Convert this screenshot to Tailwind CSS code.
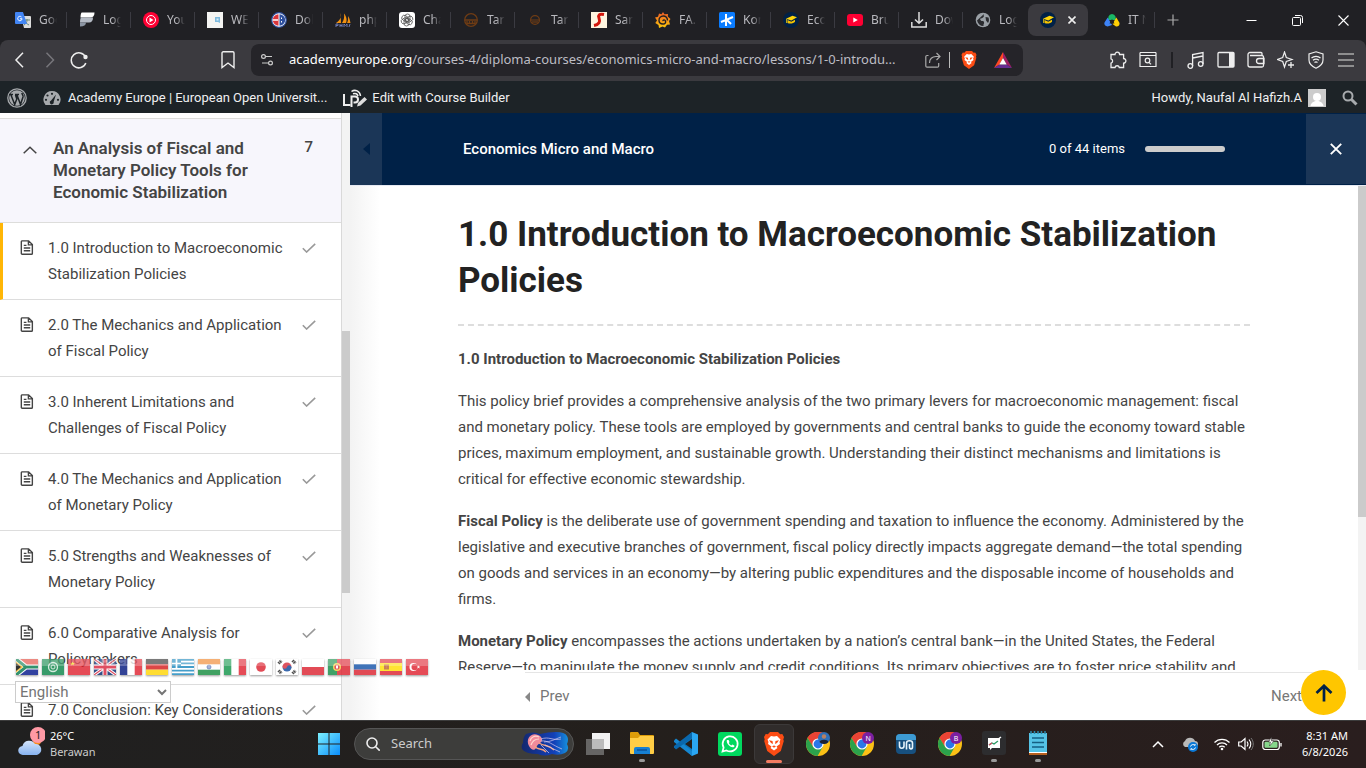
<!DOCTYPE html>
<html lang="en">
<head>
  <meta charset="UTF-8">
  <meta name="viewport" content="width=device-width, initial-scale=1">
  <title>1.0 Introduction to Macroeconomic Stabilization Policies</title>
  <script src="https://cdn.jsdelivr.net/npm/@tailwindcss/browser@4"></script>
</head>
<body class="h-screen flex flex-col overflow-hidden bg-white font-['Roboto',sans-serif] text-[#444]">

  <!-- shared icons -->
  <svg class="hidden">
    <symbol id="doc" viewBox="0 0 12 14"><path d="M1.5 .8h6L11 4.3v8.2a.8.8 0 0 1-.8.8H1.5a.8.8 0 0 1-.8-.8v-11a.8.8 0 0 1 .8-.7zM7.3.8v3.7H11M3 5h2.5M3 7.5h6M3 10h6" fill="none" stroke="#444" stroke-width="1.3"/></symbol>
    <symbol id="check" viewBox="0 0 14 10"><path d="M.8 5.2 4.6 9 13.2.9" fill="none" stroke="#999" stroke-width="1.6"/></symbol>
    <symbol id="cap" viewBox="0 0 16 16"><circle cx="8" cy="8" r="8" fill="#002147"/><path d="M3 6.800 9.500 3.800l4.500 1.400-5.600 3.400z" fill="#ffd60a"/><path d="m4.500 8 3.800 1.700 3.700-2v2c-1.500 1.800-5 2.400-7.500 1.200z" fill="#f5c400"/><path d="M3.600 7v4" stroke="#ffd60a" stroke-width=".8"/></symbol>
    <symbol id="chrome" viewBox="0 0 24 24"><circle cx="12" cy="12" r="12" fill="#fbc116"/><path d="M12 12 1.6 6A12 12 0 0 1 22.4 6z" fill="#ea4335"/><path d="M12 6.5h10.7A12 12 0 0 0 1.6 6L7 15z" fill="#ea4335"/><path d="M1.6 6a12 12 0 0 0 10 18l5.2-9.3L7.2 15z" fill="#2ba24c"/><circle cx="12" cy="12" r="5.6" fill="#fff"/><circle cx="12" cy="12" r="4.4" fill="#2a77e8"/></symbol>
    <symbol id="brave" viewBox="0 0 20 24"><path d="M6 0h8l2.2 2.300L18.300 2 20 5l-.7 2.500.5 1.500-3 10L10 24l-6.800-5L.2 9l.5-1.500L0 5l1.700-3 2.100.3z" fill="#fb4c14"/><path d="M10 4.500 13 4l3.500 3.500-1 2.500.5 2-3.500 2.500 1 1.500L10 18.500 6.500 16l1-1.500L4 12l.5-2-1-2.500L7 4z" fill="#fff"/><path d="m5 8.300 3.500.7.500 3L7 11zM15 8.300l-3.500.7-.5 3 2-1zM8 14.200l2-.7 2 .7-2 1.500z" fill="#fb4c14"/></symbol>
  </svg>

  <!-- browser tabs -->
  <header class="shrink-0 bg-[#202024] font-['Noto_Sans',sans-serif]">
    <div class="h-10 flex items-center pl-[3px] text-[12px] text-[#b9b9be]">
      <a href="#" class="w-16 h-4 pl-3 flex items-center gap-2 border-r border-[#3b3b42]">
        <svg class="w-4 h-4 shrink-0" viewBox="0 0 16 16"><path d="M6 4h9a1 1 0 0 1 1 1v10a1 1 0 0 1-1 1H9z" fill="#dcdcdc"/><path d="M9 8h6M12 7v1c0 2-1 4-3 5M10 9c1 2 2 3 4 4" stroke="#687" fill="none"/><path d="M1 0h7l4 12H1a1 1 0 0 1-1-1V1a1 1 0 0 1 1-1z" fill="#4285f4"/><path d="M6.500 5a2.200 2.200 0 1 0 .6 1.800H5" stroke="#fff" fill="none"/></svg>
        <span class="w-[18px] leading-4 overflow-hidden whitespace-nowrap mask-r-from-50%">Google</span></a>
      <a href="#" class="w-16 h-4 pl-3 flex items-center gap-2 border-r border-[#3b3b42]">
        <svg class="w-4 h-4 shrink-0" viewBox="0 0 16 16"><path d="M3 .5h12.500c0 3.500-1.500 5-4 5H1.500c0-3 .5-5 1.500-5z" fill="#fff"/><path d="M2 5.500h12c0 3.500-1.500 5-4 5H1c0-2.500.3-4 1-5z" fill="#b4bac4"/><path d="M1 10.500h6c0 2.500-2 4-6 4z" fill="#8c95a3"/></svg>
        <span class="w-[18px] leading-4 overflow-hidden whitespace-nowrap mask-r-from-50%">Log in</span></a>
      <a href="#" class="w-16 h-4 pl-3 flex items-center gap-2 border-r border-[#3b3b42]">
        <svg class="w-4 h-4 shrink-0" viewBox="0 0 16 16"><circle cx="8" cy="8" r="8" fill="#f03"/><circle cx="8" cy="8" r="4.500" fill="none" stroke="#fff"/><path d="m6.500 5.500 4 2.500-4 2.500z" fill="#fff"/></svg>
        <span class="w-[18px] leading-4 overflow-hidden whitespace-nowrap mask-r-from-50%">YouTube</span></a>
      <a href="#" class="w-16 h-4 pl-3 flex items-center gap-2 border-r border-[#3b3b42]">
        <svg class="w-4 h-4 shrink-0" viewBox="0 0 16 16"><path d="M0 0h16v16H0z" fill="#f4f4f2"/><path d="M8 5h5v6l-2-1H8z" fill="#7db9dd"/><path d="M9.500 6.500h2v2h-2z" fill="#d9edf8"/></svg>
        <span class="w-[18px] leading-4 overflow-hidden whitespace-nowrap mask-r-from-50%">WEB</span></a>
      <a href="#" class="w-16 h-4 pl-3 flex items-center gap-2 border-r border-[#3b3b42]">
        <svg class="w-4 h-4 shrink-0" viewBox="0 0 16 16"><circle cx="8" cy="8" r="7.300" fill="#fff" stroke="#2d4f9e" stroke-width="1.200"/><path d="M7.500 2.300a5.700 5.700 0 0 0 0 11.400z" fill="#d9353b"/><path d="M2 8h5" stroke="#fff" stroke-width="1.500"/><path d="M8.500 2.300a5.700 5.700 0 0 1 0 11.400z" fill="#2d4f9e"/><path d="M10 5.500h1v1.500h-1zM10 9h1v1.500h-1z" fill="#fff"/></svg>
        <span class="w-[18px] leading-4 overflow-hidden whitespace-nowrap mask-r-from-50%">Dol</span></a>
      <a href="#" class="w-16 h-4 pl-3 flex items-center gap-2 border-r border-[#3b3b42]">
        <svg class="w-4 h-4 shrink-0" viewBox="0 0 16 16"><path d="M5.500 1c1 3 .5 7-4.500 10h5zM9 1.500C12 5 12 9 11 11H7c2-3 2.500-6 2-9.500zM13 4c2 3 2 5 2.500 7H12c1-2 1.300-4 1-7z" fill="#f29111"/><path d="M1 15v-3h2v1.500H1M5 12v3m0-1.500h2M7 12v3m2 0v-3l1.500 1.500L12 12v3m2 0 1-3" fill="none" stroke="#6c78af"/></svg>
        <span class="w-[18px] leading-4 overflow-hidden whitespace-nowrap mask-r-from-50%">phpMyAdmin</span></a>
      <a href="#" class="w-16 h-4 pl-3 flex items-center gap-2 border-r border-[#3b3b42]">
        <svg class="w-4 h-4 shrink-0" viewBox="0 0 16 16"><rect width="16" height="16" rx="3" fill="#fff"/><g fill="none" stroke="#555" stroke-width=".8"><rect x="6" y="2" width="5" height="7.500" rx="2.500"/><rect x="6" y="2" width="5" height="7.500" rx="2.500" transform="rotate(60 8 8)"/><rect x="6" y="2" width="5" height="7.500" rx="2.500" transform="rotate(120 8 8)"/><rect x="6" y="2" width="5" height="7.500" rx="2.500" transform="rotate(180 8 8)"/><rect x="6" y="2" width="5" height="7.500" rx="2.500" transform="rotate(240 8 8)"/><rect x="6" y="2" width="5" height="7.500" rx="2.500" transform="rotate(300 8 8)"/></g></svg>
        <span class="w-[18px] leading-4 overflow-hidden whitespace-nowrap mask-r-from-50%">ChatGPT</span></a>
      <a href="#" class="w-16 h-4 pl-3 flex items-center gap-2 border-r border-[#3b3b42]">
        <svg class="w-4 h-4 shrink-0" viewBox="0 0 16 16"><g fill="none" stroke="#6f3c14" stroke-width="1.300"><circle cx="8" cy="8" r="6.300"/><path d="M2 8h12M4 9v3m2.500-3v2.500m3-2.500v2.500M12 9v3M4 11.500h8"/></g></svg>
        <span class="w-[18px] leading-4 overflow-hidden whitespace-nowrap mask-r-from-50%">Tarif</span></a>
      <a href="#" class="w-16 h-4 pl-3 flex items-center gap-2 border-r border-[#3b3b42]">
        <svg class="w-4 h-4 shrink-0" viewBox="0 0 16 16"><g fill="none" stroke="#6f3c14" stroke-width="1.200"><circle cx="8" cy="8" r="4.400"/><path d="M4 8h8M6 9v2m2-2v2m2-2v2"/></g></svg>
        <span class="w-[18px] leading-4 overflow-hidden whitespace-nowrap mask-r-from-50%">Tarif</span></a>
      <a href="#" class="w-16 h-4 pl-3 flex items-center gap-2 border-r border-[#3b3b42]">
        <svg class="w-4 h-4 shrink-0" viewBox="0 0 16 16"><path d="M0 0h16v16H0z" fill="#fff5df"/><path d="M13 2.500c-5-1-6 1-5 3.500 1.500 4 0 6.500-5 7.500" fill="none" stroke="#d3170c" stroke-width="3"/></svg>
        <span class="w-[18px] leading-4 overflow-hidden whitespace-nowrap mask-r-from-50%">San</span></a>
      <a href="#" class="w-16 h-4 pl-3 flex items-center gap-2 border-r border-[#3b3b42]">
        <svg class="w-4 h-4 shrink-0" viewBox="0 0 16 16"><defs><linearGradient id="gf" x2="0" y2="1"><stop stop-color="#f05a28"/><stop offset="1" stop-color="#fbca0a"/></linearGradient></defs><path d="M8 0 9.500 2.200 13 2l-.2 2.500L15.500 7 14 9l1 3.500-3 .3L10 15.500l-2.500-1L4 16l-.5-3L.3 11 2 8.500 0 5.500 3 4.800 4 1.500l2.500.8z" fill="url(#gf)"/><path d="M12.500 8.500c0-3-2-4.500-4.300-4.500S4 6 4 8.300s1.800 3.700 4 3.700 3-1.500 2.500-3-2.700-1.500-2.500.2" fill="none" stroke="#202024" stroke-width="1.400"/></svg>
        <span class="w-[18px] leading-4 overflow-hidden whitespace-nowrap mask-r-from-50%">FA.</span></a>
      <a href="#" class="w-16 h-4 pl-3 flex items-center gap-2 border-r border-[#3b3b42]">
        <svg class="w-4 h-4 shrink-0" viewBox="0 0 16 16"><rect width="16" height="16" rx="1.500" fill="#0a7cff"/><path d="M7 2v12M2 10l5-2 7-3M8 8l4 4" stroke="#fff" stroke-width="2" fill="none"/></svg>
        <span class="w-[18px] leading-4 overflow-hidden whitespace-nowrap mask-r-from-50%">Kon</span></a>
      <a href="#" class="w-16 h-4 pl-3 flex items-center gap-2 border-r border-[#3b3b42]">
        <svg class="w-4 h-4 shrink-0"><use href="#cap"/></svg>
        <span class="w-[18px] leading-4 overflow-hidden whitespace-nowrap mask-r-from-50%">Eco</span></a>
      <a href="#" class="w-16 h-4 pl-3 flex items-center gap-2 border-r border-[#3b3b42]">
        <svg class="w-4 h-4 shrink-0" viewBox="0 0 16 16"><rect y="2" width="16" height="12" rx="3" fill="#f03"/><path d="m6.300 5.500 4.500 2.500-4.500 2.500z" fill="#fff"/></svg>
        <span class="w-[18px] leading-4 overflow-hidden whitespace-nowrap mask-r-from-50%">Bruno</span></a>
      <a href="#" class="w-16 h-4 pl-3 flex items-center gap-2 border-r border-[#3b3b42]">
        <svg class="w-4 h-4 shrink-0" viewBox="0 0 16 16"><path d="M8 0v11M4 7.500 8 11.300l4-3.800M.8 10v5h14.400v-5" fill="none" stroke="#ddd" stroke-width="1.500"/></svg>
        <span class="w-[18px] leading-4 overflow-hidden whitespace-nowrap mask-r-from-50%">Dow</span></a>
      <a href="#" class="w-16 h-4 pl-3 flex items-center gap-2">
        <svg class="w-4 h-4 shrink-0" viewBox="0 0 16 16"><circle cx="8" cy="8" r="7.300" fill="#9aa0a6"/><path d="M9 2c-1 2 1 2-1 3.500S4.500 6 5.500 8s3 0 3.500 2-1 2-.5 4C5 14 3 12 2 8.500zM10.500 5l3 .5c.7 2 .7 4-.5 5.500l-2-2.500z" fill="#2a2b2f"/></svg>
        <span class="w-[18px] leading-4 overflow-hidden whitespace-nowrap mask-r-from-50%">Log in</span></a>
      <div class="w-[60px] h-8 ml-px pl-3 flex items-center gap-3 rounded-lg bg-[#3b3a3f]">
        <svg class="w-4 h-4 shrink-0"><use href="#cap"/></svg>
        <button aria-label="Close tab"><svg class="w-2 h-2" viewBox="0 0 8 8"><path d="m.5.5 7 7m0-7-7 7" stroke="#eee" stroke-width="1.600"/></svg></button>
      </div>
      <a href="#" class="w-[67px] h-4 pl-4 flex items-center gap-2 border-r border-[#3b3b42]">
        <svg class="w-4 h-4 shrink-0" viewBox="0 0 16 16"><path d="M4.500 4.500a3.700 3.700 0 0 1 7 0L12 8H4z" fill="#19b865"/><path d="M3.700 5.500 8 13l-4.500 1.500C1 14-.5 12 .8 10z" fill="#3d83f6"/><path d="m12.300 5.500 3 5c1 2.500-1 4.500-3.300 4L8.500 12z" fill="#ffcf05"/><path d="m8 7 2.500 4.500h-5z" fill="#202024"/></svg>
        <span class="w-[18px] leading-4 overflow-hidden whitespace-nowrap mask-r-from-50%">IT N</span></a>
      <button class="ml-3" aria-label="New tab"><svg class="w-3 h-3" viewBox="0 0 12 12"><path d="M6 .5v11M.5 6h11" stroke="#aaa" stroke-width="1.200"/></svg></button>
      <div class="ml-auto pr-[17px] flex items-center gap-[35px]">
        <button aria-label="Minimize"><svg class="w-[11px] h-[11px]" viewBox="0 0 11 11"><path d="M.5 5.500h10" stroke="#fff"/></svg></button>
        <button aria-label="Restore"><svg class="w-[11px] h-[11px]" viewBox="0 0 11 11"><path d="M1.500 2.500h6a1 1 0 0 1 1 1v6a1 1 0 0 1-1 1h-6a1 1 0 0 1-1-1v-6a1 1 0 0 1 1-1zM3 .5h5.500a2 2 0 0 1 2 2V8" fill="none" stroke="#fff"/></svg></button>
        <button aria-label="Close"><svg class="w-[11px] h-[11px]" viewBox="0 0 11 11"><path d="m.5.5 10 10m0-10-10 10" stroke="#fff" stroke-width="1.100"/></svg></button>
      </div>
    </div>

    <!-- toolbar -->
    <div class="h-[41px] pb-px px-3 flex items-center rounded-t-lg bg-[#3b3a3f]">
      <nav class="flex items-center gap-[13px]">
        <button aria-label="Back"><svg class="w-4 h-4" viewBox="0 0 16 16"><path d="M11 .8 4 8l7 7.200" fill="none" stroke="#eee" stroke-width="1.500"/></svg></button>
        <button aria-label="Forward"><svg class="w-4 h-4" viewBox="0 0 16 16"><path d="M5.500.8 12.500 8l-7 7.200" fill="none" stroke="#77767b" stroke-width="1.500"/></svg></button>
        <button aria-label="Reload"><svg class="w-[18px] h-[18px]" viewBox="0 0 18 18"><path d="M15.500 6A7.500 7.500 0 1 0 15.800 12" fill="none" stroke="#eee" stroke-width="1.500"/><circle cx="15.500" cy="6" r="2.200" fill="#eee"/></svg></button>
      </nav>
      <button class="ml-[133px]" aria-label="Bookmark"><svg class="w-3.5 h-[18px]" viewBox="0 0 14 18"><path d="M1 2a1.200 1.200 0 0 1 1.200-1.200h9.600A1.200 1.200 0 0 1 13 2v14.500L7 12l-6 4.500z" fill="none" stroke="#eee" stroke-width="1.400"/></svg></button>
      <div class="flex-1 h-8 ml-4 px-2.5 flex items-center rounded-lg bg-[#252429]">
        <svg class="w-3 h-3 shrink-0" viewBox="0 0 12 12"><g fill="none" stroke="#ccc" stroke-width="1.200"><circle cx="2.500" cy="2.500" r="1.900"/><path d="M4.500 2.500H11M1 9h6.500"/><circle cx="9.500" cy="9" r="1.900"/></g></svg>
        <span class="ml-4 flex-1 w-0 overflow-hidden text-ellipsis whitespace-nowrap text-[13px] text-[#bdbdc4]"><span class="text-white">academyeurope.org</span>/courses-4/diploma-courses/economics-micro-and-macro/lessons/1-0-introdu...</span>
        <svg class="w-4 h-4 ml-4 shrink-0" viewBox="0 0 16 16"><path d="M3.500 3.500H2a1.200 1.200 0 0 0-1.200 1.200V14A1.200 1.200 0 0 0 2 15.200h10.500a1.200 1.200 0 0 0 1.200-1.200v-3M4.500 11c0-4 2.500-6.500 6.500-6.500h4M11.500 1 15 4.500 11.500 8" fill="none" stroke="#aaa" stroke-width="1.200"/></svg>
        <span class="w-px h-4 ml-2 bg-[#bbb]"></span>
        <svg class="w-4 h-[18px] ml-[11px]"><use href="#brave"/></svg>
        <svg class="w-[18px] h-4 ml-[17px] mr-px" viewBox="0 0 18 16"><path d="M9 0 0 16l5.500-3.500L9 6z" fill="#ff4724"/><path d="m9 0 9 16-5.500-3.500L9 6z" fill="#9e1f63"/><path d="M0 16h18l-5.500-3.500h-7z" fill="#662d91"/><path d="m9 6 3.700 6.500H5.300z" fill="#fff"/></svg>
      </div>
      <nav class="ml-[86px] -mr-px flex items-center gap-3">
        <button aria-label="Extensions"><svg class="w-[18px] h-[18px]" viewBox="0 0 18 18"><path d="M2 3.500h4a2.300 2.300 0 1 1 4.600 0h4v4a2.300 2.300 0 1 1 0 4.600v4.400h-4.300a2.200 2.200 0 0 0-4.300 0H2v-4.300a2.300 2.300 0 0 0 0-4.400z" fill="none" stroke="#eee" stroke-width="1.300"/></svg></button>
        <button aria-label="Search tabs"><svg class="w-[18px] h-[18px]" viewBox="0 0 18 18"><path d="M1 1.500h16M1 4.500h16v11H1zM1 1.500v3m16-3v3" fill="none" stroke="#eee" stroke-width="1.200"/><circle cx="8.500" cy="9.500" r="2.300" fill="none" stroke="#eee" stroke-width="1.200"/><path d="m10 11.300 2 2" stroke="#eee" stroke-width="1.200"/></svg></button>
        <span class="w-0.5 h-4 mx-0.5 bg-[#202024]"></span>
        <button aria-label="Media"><svg class="w-[18px] h-[18px]" viewBox="0 0 18 18"><g fill="none" stroke="#eee" stroke-width="1.300"><circle cx="3.300" cy="15" r="2.300"/><circle cx="13.700" cy="13" r="2.300"/><path d="M5.600 15V3.500L16 1.500V13M5.600 7 16 5"/></g></svg></button>
        <button aria-label="Sidebar"><svg class="w-[18px] h-[18px]" viewBox="0 0 18 18"><rect x="1" y="1.500" width="16" height="14.500" rx="1" fill="none" stroke="#eee" stroke-width="1.300"/><path d="M12 1.500h5V16h-5z" fill="#eee"/></svg></button>
        <button aria-label="Wallet"><svg class="w-[18px] h-[18px]" viewBox="0 0 18 18"><path d="M15 4.500V2.500a1 1 0 0 0-1-1H3a2 2 0 0 0-2 2V14a2 2 0 0 0 2 2h12a1.500 1.500 0 0 0 1.500-1.500V6A1.500 1.500 0 0 0 15 4.500H3M17 7.500h-5a2.500 2.500 0 0 0 0 5h5z" fill="none" stroke="#eee" stroke-width="1.300"/></svg></button>
        <button aria-label="AI assistant"><svg class="w-[18px] h-[18px]" viewBox="0 0 18 18"><path d="M7.500 1 9.300 6.500 15 8.500l-5.700 2-1.800 5.500-1.800-5.500L.5 8.500l5.200-2z" fill="none" stroke="#eee" stroke-width="1.200"/><path d="M14 11v6m-3-3h6" stroke="#eee" stroke-width="1.300"/></svg></button>
        <button aria-label="VPN"><svg class="w-[18px] h-[18px]" viewBox="0 0 18 18"><path d="M9 .8 16 3v6c0 4-3 6.500-7 8.200C5 15.500 2 13 2 9V3zM4.500 7c2.500-2.200 6.500-2.200 9 0M6 9.300c1.800-1.500 4.200-1.500 6 0M7.500 11.500c1-.7 2-.7 3 0" fill="none" stroke="#eee" stroke-width="1.200"/></svg></button>
        <button aria-label="Menu"><svg class="w-[18px] h-[18px]" viewBox="0 0 18 18"><path d="M1 3h16M1 9h16M1 15h16" stroke="#aaa" stroke-width="1.600"/></svg></button>
      </nav>
    </div>
  </header>

  <!-- admin bar -->
  <div class="h-8 shrink-0 px-2 pt-px flex items-center bg-[#1d2327] text-[13px] text-[#f0f0f1]">
    <svg class="w-5 h-5 -ml-px" viewBox="0 0 20 20"><circle cx="10" cy="10" r="9.200" fill="none" stroke="#a7aaad" stroke-width="1.300"/><circle cx="10" cy="10" r="7.800" fill="#a7aaad"/><path d="M2 6.500h4m2 0h4M4 7l3.700 9.500L9.800 11 8.500 7M10 7l3.500 9.500L16 9c.5-2-1.200-2.500-1-4" fill="none" stroke="#1d2327" stroke-width="1.500"/></svg>
    <svg class="w-[18px] h-4 ml-4" viewBox="0 0 18 16"><path d="M9 1a8.500 8.500 0 0 0-6.500 14h13A8.500 8.500 0 0 0 9 1z" fill="#a7aaad"/><g fill="#1d2327"><circle cx="9" cy="3.800" r="1.100"/><circle cx="4.500" cy="5.500" r="1.100"/><circle cx="3" cy="9.800" r="1.100"/><circle cx="15" cy="9.800" r="1.100"/><path d="m13 4.500-2.300 7.300a2 2 0 1 1-2.600-1.300z"/></g></svg>
    <a href="#" class="ml-[7px]">Academy Europe | European Open Universit...</a>
    <svg class="w-[26px] h-5 ml-[15px]" viewBox="0 0 26 20"><g fill="none" stroke="#eee" stroke-width="2"><path d="M2 6v11h6.500"/><path d="M9.500 19V8.500H13a3 3 0 0 1 0 6h-1.500"/><path d="M9.500 3.500c3.500-2.500 8.500-.5 9 4.500M11 5.800c2.500-1 4.500.2 5 2.200" stroke-width="1.500"/></g><path d="m15 18.500 1-3.500 6.500-6 2.500 2.500-6.500 6z" fill="#ddd"/></svg>
    <a href="#" class="ml-1">Edit with Course Builder</a>
    <a href="#" class="ml-auto">Howdy, Naufal Al Hafizh.A</a>
    <svg class="w-[18px] h-[18px] ml-1.5" viewBox="0 0 18 18"><path d="M0 0h18v18H0z" fill="#ccc"/><circle cx="9" cy="8" r="4" fill="#fff"/><path d="M2.500 17c.5-3.500 3-4 5-5h3c2 1 4.500 1.500 5 5z" fill="#fff"/></svg>
    <svg class="w-4 h-4 ml-4" viewBox="0 0 16 16"><circle cx="6" cy="6" r="4.500" fill="none" stroke="#a7aaad" stroke-width="2"/><path d="m9.500 9.500 5 5" stroke="#a7aaad" stroke-width="3"/></svg>
  </div>

  <div class="relative flex-1 min-h-0 flex">

    <!-- curriculum -->
    <aside class="w-[350px] shrink-0 flex overflow-hidden">
      <div class="flex-1 pt-[5px] border-r border-[#d9d9d9] text-[15px] leading-[26px]">
        <div class="flex items-start pl-[23px] pr-7 pt-[18px] pb-[19px] border-y border-[#dddddb] bg-[#f7f6fc] font-bold">
          <svg class="w-3.5 h-2 mt-[9px]" viewBox="0 0 14 8"><path d="m.7 7.300 6.300-6 6.300 6" fill="none" stroke="#444" stroke-width="1.500"/></svg>
          <h2 class="ml-4 w-[220px] text-[17px] leading-[22px] font-semibold">An Analysis of Fiscal and Monetary Policy Tools for Economic Stabilization</h2>
          <span class="ml-auto font-medium leading-5">7</span>
        </div>
        <a href="#" class="flex items-start py-3 pl-[17px] pr-[25px] border-b border-b-[#ddd] border-l-3 border-l-[#ffb606]">
          <svg class="w-3.5 h-[15px] mt-[5px]"><use href="#doc"/></svg><span class="w-[240px] ml-3.5">1.0 Introduction to Macroeconomic Stabilization Policies</span><svg class="w-3.5 h-2.5 ml-auto mt-2"><use href="#check"/></svg>
        </a>
        <a href="#" class="flex items-start py-3 pl-5 pr-[25px] border-b border-[#ddd]">
          <svg class="w-3.5 h-[15px] mt-[5px]"><use href="#doc"/></svg><span class="w-[240px] ml-3.5">2.0 The Mechanics and Application of Fiscal Policy</span><svg class="w-3.5 h-2.5 ml-auto mt-2"><use href="#check"/></svg>
        </a>
        <a href="#" class="flex items-start py-3 pl-5 pr-[25px] border-b border-[#ddd]">
          <svg class="w-3.5 h-[15px] mt-[5px]"><use href="#doc"/></svg><span class="w-[240px] ml-3.5">3.0 Inherent Limitations and Challenges of Fiscal Policy</span><svg class="w-3.5 h-2.5 ml-auto mt-2"><use href="#check"/></svg>
        </a>
        <a href="#" class="flex items-start py-3 pl-5 pr-[25px] border-b border-[#ddd]">
          <svg class="w-3.5 h-[15px] mt-[5px]"><use href="#doc"/></svg><span class="w-[240px] ml-3.5">4.0 The Mechanics and Application of Monetary Policy</span><svg class="w-3.5 h-2.5 ml-auto mt-2"><use href="#check"/></svg>
        </a>
        <a href="#" class="flex items-start py-3 pl-5 pr-[25px] border-b border-[#ddd]">
          <svg class="w-3.5 h-[15px] mt-[5px]"><use href="#doc"/></svg><span class="w-[240px] ml-3.5">5.0 Strengths and Weaknesses of Monetary Policy</span><svg class="w-3.5 h-2.5 ml-auto mt-2"><use href="#check"/></svg>
        </a>
        <a href="#" class="flex items-start py-3 pl-5 pr-[25px] border-b border-[#ddd]">
          <svg class="w-3.5 h-[15px] mt-[5px]"><use href="#doc"/></svg><span class="w-[240px] ml-3.5">6.0 Comparative Analysis for Policymakers</span><svg class="w-3.5 h-2.5 ml-auto mt-2"><use href="#check"/></svg>
        </a>
        <a href="#" class="flex items-start py-3 pl-5 pr-[25px]">
          <svg class="w-3.5 h-[15px] mt-[5px]"><use href="#doc"/></svg><span class="w-[240px] ml-3.5">7.0 Conclusion: Key Considerations</span><svg class="w-3.5 h-2.5 ml-auto mt-2"><use href="#check"/></svg>
        </a>
      </div>
      <div class="w-2 pt-[218px] bg-[#f3f3f3]"><div class="h-[262px] bg-[#cbcbcb]"></div></div>
    </aside>

    <main class="flex-1 min-w-0 flex flex-col">
      <div class="h-[72px] shrink-0 flex items-center bg-[#002147] text-white">
        <button class="w-8 h-full flex items-center justify-center bg-[#1b3657]" aria-label="Toggle sidebar"><svg class="w-[7px] h-3" viewBox="0 0 7 12"><path d="M7 0v12L0 6z" fill="#002147"/></svg></button>
        <a href="#" class="ml-[81px] text-[15px] font-medium">Economics Micro and Macro</a>
        <label for="progress" class="ml-auto text-[13px]">0 of 44 items</label>
        <div id="progress" role="progressbar" aria-valuenow="0" class="w-20 h-1.5 ml-5 mr-[81px] rounded-full bg-[#ccc]"></div>
        <button class="w-[60px] h-[70px] flex items-center justify-center bg-[#1b3657]" aria-label="Close lesson"><svg class="w-3 h-3" viewBox="0 0 12 12"><path d="m.8.8 10.400 10.400m0-10.400L.8 11.200" stroke="#fff" stroke-width="1.900"/></svg></button>
      </div>

      <div class="flex-1 flex flex-col min-h-0 border-t border-[#e6e9f2] bg-linear-to-r from-[#f3f3f3] to-white to-[30px]">
        <div class="flex-1 min-h-0 flex">
          <article class="flex-1 overflow-hidden text-[15px] leading-[26px]">
            <div class="max-w-[792px] mx-auto pt-[26px] flex flex-col gap-4">
              <h1 class="pb-5 mb-1 border-b-2 border-dashed border-[#ddd] text-[35px] leading-[46px] font-bold text-[#222]">1.0 Introduction to Macroeconomic Stabilization Policies</h1>
              <p class="font-bold">1.0 Introduction to Macroeconomic Stabilization Policies</p>
              <p>This policy brief provides a comprehensive analysis of the two primary levers for macroeconomic management: fiscal and monetary policy. These tools are employed by governments and central banks to guide the economy toward stable prices, maximum employment, and sustainable growth. Understanding their distinct mechanisms and limitations is critical for effective economic stewardship.</p>
              <p><b>Fiscal Policy</b> is the deliberate use of government spending and taxation to influence the economy. Administered by the legislative and executive branches of government, fiscal policy directly impacts aggregate demand—the total spending on goods and services in an economy—by altering public expenditures and the disposable income of households and firms.</p>
              <p><b>Monetary Policy</b> encompasses the actions undertaken by a nation’s central bank—in the United States, the Federal Reserve—to manipulate the money supply and credit conditions. Its primary objectives are to foster price stability and</p>
            </div>
          </article>
          <div class="w-2 bg-[#f3f3f3]"><div class="h-[331px] bg-[#cbcbcb]"></div></div>
        </div>
        <nav class="h-12 mt-0.5 ml-[175px] mr-[50px] flex items-center justify-between border-t border-[#e5e5e5] text-[15px] text-[#777]">
          <a href="#" class="flex items-center gap-2.5"><svg class="w-[5px] h-2.5" viewBox="0 0 5 10"><path d="M5 0v10L0 5z" fill="#888"/></svg>Prev</a>
          <a href="#" class="pr-3.5">Next</a>
        </nav>
      </div>
    </main>

    <!-- language switcher, floats over the lesson -->
    <div class="absolute left-4 bottom-[45px] flex gap-1 opacity-80">
      <svg class="w-[22px] h-4 shadow-[0_1px_2px_rgba(0,0,0,0.5)]" viewBox="0 0 22 16"><path d="M0 0h22v8H0z" fill="#e03c31"/><path d="M0 8h22v8H0z" fill="#001489"/><path d="M0 0l10 8-10 8M10 8h12" fill="none" stroke="#fff" stroke-width="5"/><path d="M0 0l10 8-10 8M10 8h12" fill="none" stroke="#007749" stroke-width="3"/><path d="m0 2.500 7 5.500-7 5.500z" fill="#ffb81c"/><path d="m0 4 5 4-5 4z"/><path d="M0 0h22v7H0z" fill="#fff" opacity=".25"/></svg>
      <svg class="w-[22px] h-4 shadow-[0_1px_2px_rgba(0,0,0,0.5)]" viewBox="0 0 22 16"><path d="M0 0h22v16H0z" fill="#078345"/><circle cx="11" cy="8" r="4.500" fill="none" stroke="#cde7d8" stroke-width="1.300"/><circle cx="11" cy="8" r="2" fill="none" stroke="#cde7d8"/><path d="M0 0h22v7H0z" fill="#fff" opacity=".25"/></svg>
      <svg class="w-[22px] h-4 shadow-[0_1px_2px_rgba(0,0,0,0.5)]" viewBox="0 0 22 16"><path d="M0 0h22v16H0z" fill="#df1f2c"/><path d="m4.500 2.500.7 1.500h1.600L5.500 5 6 6.500 4.500 5.600 3 6.500 3.500 5 2.200 4h1.600z" fill="#ffde00"/><path d="M0 0h22v7H0z" fill="#fff" opacity=".25"/></svg>
      <svg class="w-[22px] h-4 shadow-[0_1px_2px_rgba(0,0,0,0.5)]" viewBox="0 0 22 16"><path d="M0 0h22v16H0z" fill="#012169"/><path d="m0 0 22 16M22 0 0 16" stroke="#fff" stroke-width="3.200"/><path d="m0 0 22 16M22 0 0 16" stroke="#d8213a" stroke-width="1.200"/><path d="M11 0v16M0 8h22" stroke="#fff" stroke-width="5"/><path d="M11 0v16M0 8h22" stroke="#d8213a" stroke-width="3"/><path d="M0 0h22v7H0z" fill="#fff" opacity=".25"/></svg>
      <svg class="w-[22px] h-4 shadow-[0_1px_2px_rgba(0,0,0,0.5)]" viewBox="0 0 22 16"><path d="M0 0h22v16H0z" fill="#fff"/><path d="M0 0h7.300v16H0z" fill="#00157c"/><path d="M14.700 0H22v16h-7.300z" fill="#df1f2c"/><path d="M0 0h22v7H0z" fill="#fff" opacity=".25"/></svg>
      <svg class="w-[22px] h-4 shadow-[0_1px_2px_rgba(0,0,0,0.5)]" viewBox="0 0 22 16"><path d="M0 0h22v5.300H0z" fill="#222"/><path d="M0 5.300h22v5.400H0z" fill="#d41a1a"/><path d="M0 10.700h22V16H0z" fill="#ffd500"/><path d="M0 0h22v7H0z" fill="#fff" opacity=".25"/></svg>
      <svg class="w-[22px] h-4 shadow-[0_1px_2px_rgba(0,0,0,0.5)]" viewBox="0 0 22 16"><path d="M0 0h22v16H0z" fill="#1787bd"/><path d="M0 2.700h22M0 6.200h22M0 9.800h22M0 13.300h22" stroke="#fff" stroke-width="1.700"/><path d="M0 0h9v9H0z" fill="#1787bd"/><path d="M4.500 0v9M0 4.500h9" stroke="#fff" stroke-width="1.700"/><path d="M0 0h22v7H0z" fill="#fff" opacity=".25"/></svg>
      <svg class="w-[22px] h-4 shadow-[0_1px_2px_rgba(0,0,0,0.5)]" viewBox="0 0 22 16"><path d="M0 0h22v16H0z" fill="#fff"/><path d="M0 0h22v5.300H0z" fill="#ef7d1a"/><path d="M0 10.700h22V16H0z" fill="#128a3c"/><circle cx="11" cy="8" r="2" fill="#8fa3d0" stroke="#3d5ca8" stroke-width=".7"/><path d="M0 0h22v7H0z" fill="#fff" opacity=".25"/></svg>
      <svg class="w-[22px] h-4 shadow-[0_1px_2px_rgba(0,0,0,0.5)]" viewBox="0 0 22 16"><path d="M0 0h22v16H0z" fill="#fff"/><path d="M0 0h7.300v16H0z" fill="#109348"/><path d="M14.700 0H22v16h-7.300z" fill="#df1f2c"/><path d="M0 0h22v7H0z" fill="#fff" opacity=".25"/></svg>
      <svg class="w-[22px] h-4 shadow-[0_1px_2px_rgba(0,0,0,0.5)]" viewBox="0 0 22 16"><path d="M0 0h22v16H0z" fill="#fff"/><circle cx="11" cy="8" r="4.800" fill="#dc1f2c"/><path d="M0 0h22v7H0z" fill="#fff" opacity=".2"/></svg>
      <svg class="w-[22px] h-4 shadow-[0_1px_2px_rgba(0,0,0,0.5)]" viewBox="0 0 22 16"><path d="M0 0h22v16H0z" fill="#fff"/><path d="M6.500 8a4.500 4.500 0 0 1 9 0z" fill="#d62a3a"/><path d="M6.500 8a4.500 4.500 0 0 0 9 0z" fill="#0a459b"/><circle cx="8.800" cy="7.500" r="2.200" fill="#d62a3a"/><circle cx="13.200" cy="8.500" r="2.200" fill="#0a459b"/><path d="m2.500 4.500 3-3M16.500 1.500l3 3M2.500 11.500l3 3M16.500 14.500l3-3" stroke="#222" stroke-width="3" stroke-dasharray="1.500 .5"/></svg>
      <svg class="w-[22px] h-4 shadow-[0_1px_2px_rgba(0,0,0,0.5)]" viewBox="0 0 22 16"><path d="M0 0h22v8H0z" fill="#fff"/><path d="M0 8h22v8H0z" fill="#dc1f2c"/></svg>
      <svg class="w-[22px] h-4 shadow-[0_1px_2px_rgba(0,0,0,0.5)]" viewBox="0 0 22 16"><path d="M0 0h22v16H0z" fill="#df1f2c"/><path d="M0 0h9v16H0z" fill="#108a42"/><circle cx="9" cy="8" r="3.300" fill="#d62a3a" stroke="#f3d33c" stroke-width="1.400"/><path d="M8 6.500h2v3H8z" fill="#fff"/><path d="M0 0h22v7H0z" fill="#fff" opacity=".25"/></svg>
      <svg class="w-[22px] h-4 shadow-[0_1px_2px_rgba(0,0,0,0.5)]" viewBox="0 0 22 16"><path d="M0 0h22v16H0z" fill="#fff"/><path d="M0 5.300h22v5.400H0z" fill="#1252a8"/><path d="M0 10.700h22V16H0z" fill="#dc1f2c"/></svg>
      <svg class="w-[22px] h-4 shadow-[0_1px_2px_rgba(0,0,0,0.5)]" viewBox="0 0 22 16"><path d="M0 0h22v16H0z" fill="#dc1f2c"/><path d="M0 4h22v8H0z" fill="#ffdf00"/><path d="M4 6h1v4H4m5-4H8v4h1M5 6h3v4H5z" fill="#d06a30" stroke="#b5622c"/><path d="M0 0h22v7H0z" fill="#fff" opacity=".25"/></svg>
      <svg class="w-[22px] h-4 shadow-[0_1px_2px_rgba(0,0,0,0.5)]" viewBox="0 0 22 16"><path d="M0 0h22v16H0z" fill="#df1f2c"/><circle cx="7.500" cy="8" r="4" fill="#fff"/><circle cx="8.700" cy="8" r="3.200" fill="#df1f2c"/><path d="m12.500 6.300.5 1.200h1.300l-1 .8.400 1.300-1.200-.8-1.200.8.400-1.300-1-.8H12z" fill="#fff"/><path d="M0 0h22v7H0z" fill="#fff" opacity=".25"/></svg>
    </div>
    <select aria-label="Language" class="absolute left-[15px] bottom-[17px] w-[156px] h-[22px] border border-[#ccc] bg-white text-[15px] text-[#757575]">
      <option>English</option>
    </select>

    <button class="absolute right-5 bottom-[5px] w-[45px] h-[45px] flex items-center justify-center rounded-full bg-[#ffc600]" aria-label="Back to top">
      <svg class="w-[18px] h-[18px]" viewBox="0 0 18 18"><path d="M9 17.500V2M1.500 9 9 1.800 16.500 9" fill="none" stroke="#002147" stroke-width="2.700"/></svg>
    </button>
  </div>

  <!-- taskbar -->
  <footer class="h-12 shrink-0 pb-0.5 flex items-center border-t border-[#3c3c3c] bg-linear-to-r from-[#202020] via-[#241f1c] to-[#2a1e1e] font-['Noto_Sans',sans-serif] text-[11px] text-white">
    <div class="w-[317px] pl-[17px] flex items-center gap-[5px]">
      <svg class="w-7 h-[34px]" viewBox="0 0 28 34"><defs><linearGradient id="cl" x2="0" y2="1"><stop stop-color="#d5e5fc"/><stop offset="1" stop-color="#86b2ef"/></linearGradient></defs><circle cx="20" cy="14" r="4" fill="#f78b1d"/><path d="M6 28a4.500 4.500 0 0 1-.5-9A6.800 6.800 0 0 1 18 17a5.600 5.600 0 0 1 2 11z" fill="url(#cl)"/><circle cx="21" cy="8" r="8" fill="#ff99a4"/><text x="18" y="12" font-size="11" fill="#222">1</text></svg>
      <div class="leading-4"><p>26°C</p><p class="text-[#ccc]">Berawan</p></div>
    </div>
    <button class="w-6 h-6" aria-label="Start"><svg class="w-6 h-6" viewBox="0 0 24 24"><defs><linearGradient id="wn" x2="1" y2="1"><stop stop-color="#7cf1ff"/><stop offset="1" stop-color="#0a8cfa"/></linearGradient></defs><path d="M1 1h10.500v10.500H1zM12.500 1H23v10.500H12.500zM1 12.500h10.500V23H1zM12.500 12.500H23V23H12.500z" fill="url(#wn)"/></svg></button>
    <div class="w-[220px] h-8 ml-[13px] mr-0.5 pl-[11px] pr-1 flex items-center rounded-full border border-[#555] bg-[#3d3d3b]">
      <svg class="w-3.5 h-3.5 shrink-0" viewBox="0 0 14 14"><circle cx="6" cy="6" r="5" fill="none" stroke="#eee" stroke-width="1.600"/><path d="m9.700 9.700 4 4" stroke="#eee" stroke-width="1.600"/></svg>
      <input type="text" aria-label="Search" placeholder="Search" class="flex-1 w-0 ml-[11px] text-[13px] placeholder:text-[#ccc]">
      <svg class="w-12 h-6" viewBox="0 0 48 24"><defs><linearGradient id="sea" x2="1" y2="0"><stop stop-color="#14286e"/><stop offset=".7" stop-color="#1240b8"/><stop offset="1" stop-color="#1690dd"/></linearGradient></defs><path d="M5 2q7-3 14 0 8-2 16-2 9 0 11 4 2 3 0 8 3 6-2 9-6 3-13 1-8 3-14 0Q4 22 1 17q-1-4 1-6 0-6 3-9z" fill="url(#sea)"/><path d="M8 14C4 6 11 0 17 3c5 2 5 6 2 8-2 1.500-3 2-4 5-1.500 3-5 2-7-2z" fill="#f08b9b"/><path d="M9 9c1-4 5-6 9-4M10 13c1-3 4-6 8-6" fill="none" stroke="#ffd6cf" stroke-width="1.200"/><path d="M14 14c2 5 7 1 11 6M18 11c6 4 9 1 15 7" fill="none" stroke="#f5a27c" stroke-width="1.500"/><path d="M20 9c7-1 11 4 21 8M20 7c8-3 12 2 20 0M23 10c7 0 11-3 17-5M24 13l15 7M20 13l8 8" fill="none" stroke="#d5c8ee" stroke-width=".7"/></svg>
    </div>
    <nav class="flex items-center h-full">
      <button class="w-11 flex justify-center" aria-label="Task view"><svg class="w-6 h-6" viewBox="0 0 24 24"><path d="M6 1h18v16H6z" fill="#f2f2f2"/><path d="M0 7h18v16H0z" fill="#777" opacity=".8"/><path d="M6 7h12v10H6z" fill="#bbb"/></svg></button>
      <button class="w-11 h-10 pt-[7px] flex flex-col items-center gap-1" aria-label="Files"><svg class="w-6 h-6 shrink-0" viewBox="0 0 24 24"><path d="M0 2a1 1 0 0 1 1-1h7l2 3h13a1 1 0 0 1 1 1v16H0z" fill="#dc9c09"/><path d="M0 7h8l2-2h14v17a1 1 0 0 1-1 1H1a1 1 0 0 1-1-1z" fill="#ffcd45"/><path d="M4 23v-5a2 2 0 0 1 2-2h12a2 2 0 0 1 2 2v5z" fill="#1680d3"/><path d="M7 19h10" stroke="#0b539b" stroke-width="1.500"/></svg><span class="w-1.5 h-[3px] shrink-0 rounded-full bg-[#999]"></span></button>
      <button class="w-11 flex justify-center" aria-label="Code editor"><svg class="w-6 h-6" viewBox="0 0 24 24"><path d="m18 0-13 12 13 12V17L11 12l7-5z" fill="#0b77bd"/><path d="M0 8.500 2 6.500 18 19v5L0 10z" fill="#1687d0"/><path d="M0 15.500 2 17.500 18 6V0L0 14z" fill="#0a68ad"/><path d="m18 0 6 2.500v19L18 24z" fill="#2aa6f2"/></svg></button>
      <button class="w-11 flex justify-center" aria-label="WhatsApp"><svg class="w-6 h-6" viewBox="0 0 24 24"><rect width="24" height="24" rx="3" fill="#00d95f"/><path d="m4.500 19.500 1.100-4A7.500 7.500 0 1 1 8.500 18.400z" fill="none" stroke="#fff" stroke-width="1.700"/><path d="M9 8c-1.500 2 3 8 6.300 7.300 1.200-.4 1.300-1.200 1-1.800l-2-1-1 1c-1-.4-2-1.500-2.500-2.500l.7-1L10.600 8z" fill="#fff"/></svg></button>
      <button class="w-10 h-10 mx-0.5 pt-[7px] flex flex-col items-center gap-1 rounded-md border border-[#3c3939] bg-[#302c2b]" aria-label="Brave"><svg class="w-5 h-6 shrink-0"><use href="#brave"/></svg><span class="w-4 h-[3px] shrink-0 rounded-full bg-[#f47c62]"></span></button>
      <button class="w-11 flex justify-center" aria-label="Chrome profile 1"><svg class="w-6 h-6" viewBox="0 0 24 24"><use href="#chrome" width="24" height="24"/><circle cx="18" cy="6" r="6" fill="#2f6fb8"/><circle cx="18" cy="4.500" r="2.200" fill="#b98062"/><path d="M13.500 10c1-3 8-3 9 0a6 6 0 0 1-9 0z" fill="#1a2233"/></svg></button>
      <button class="w-11 flex justify-center" aria-label="Chrome profile 2"><svg class="w-6 h-6" viewBox="0 0 24 24"><use href="#chrome" width="24" height="24"/><circle cx="18" cy="6" r="6" fill="#7b1fa2"/><text x="15.500" y="8.500" font-size="7" fill="#fff">N</text></svg></button>
      <button class="w-11 flex justify-center" aria-label="Dev tool"><svg class="w-6 h-6" viewBox="0 0 24 24"><rect x="2" y="2" width="20" height="20" rx="4" fill="#17507f"/><path d="M2 8V6a4 4 0 0 1 4-4h12a4 4 0 0 1 4 4v2z" fill="#3d9bd3"/><path d="M5.500 9.500v4.500c0 3 4.500 3 4.500 0V9.500M12.500 17.500V11c0-3 6-3 6 0v4c0 2.500-3 2.500-3 0v-3" fill="none" stroke="#e6f3fb" stroke-width="1.600"/></svg></button>
      <button class="w-11 flex justify-center" aria-label="Chrome profile 3"><svg class="w-6 h-6" viewBox="0 0 24 24"><use href="#chrome" width="24" height="24"/><circle cx="18" cy="6" r="6" fill="#7b1fa2"/><text x="15.800" y="8.500" font-size="7" fill="#fff">B</text></svg></button>
      <button class="w-11 h-10 pt-[7px] flex flex-col items-center gap-1" aria-label="Monitor"><svg class="w-6 h-6 shrink-0" viewBox="0 0 24 24"><rect width="24" height="24" rx="3" fill="#2d2d2f"/><path d="M6 7h12v10H10l-2 2v-2H6z" fill="#fff"/><path d="m7 14 3-2 2 1 4-3" fill="none" stroke="#2b9a66" stroke-width="1.300"/><path d="m7 14 3-2" stroke="#d64560" stroke-width="1.300"/><path d="m15 9 4-3" stroke="#fff" stroke-width="1.500"/></svg><span class="w-1.5 h-[3px] shrink-0 rounded-full bg-[#999]"></span></button>
      <button class="w-11 h-10 pt-[7px] flex flex-col items-center gap-1" aria-label="Notepad"><svg class="w-6 h-6 shrink-0" viewBox="0 0 24 24"><path d="M3 2h18v20H3z" fill="#55c3e6"/><path d="M3 21h18v1H3z" fill="#fff"/><path d="M3 22h18v2H3z" fill="#b8601f"/><path d="M6 7h12M6 11.500h12M6 16h12" stroke="#155f82" stroke-width="1.500"/><path d="M5 0v3m3.500-3v3M12 0v3m3.500-3v3M19 0v3" stroke="#2c88aa" stroke-width="1.500"/></svg><span class="w-1.5 h-[3px] shrink-0 rounded-full bg-[#999]"></span></button>
    </nav>
    <div class="ml-auto pr-[18px] flex items-center">
      <svg class="w-3 h-2" viewBox="0 0 12 8"><path d="m1 7 5-5 5 5" fill="none" stroke="#fff" stroke-width="1.500"/></svg>
      <svg class="w-4 h-4 ml-[18px]" viewBox="0 0 16 16"><path d="M3 11a3.300 3.300 0 0 1 0-6 5.500 5.500 0 0 1 10 0 3 3 0 0 1 0 6z" fill="#b8b8b8"/><circle cx="11" cy="11" r="5" fill="#0a78d6"/><path d="M8.500 10.500a2.600 2.600 0 0 1 4.500-1V8m.5 3.500a2.600 2.600 0 0 1-4.500 1V14" fill="none" stroke="#fff"/></svg>
      <svg class="w-4 h-4 ml-4" viewBox="0 0 16 16"><path d="M.5 6.500a10.500 10.500 0 0 1 15 0M3 9a7 7 0 0 1 10 0M5.300 11.300a3.800 3.800 0 0 1 5.400 0" fill="none" stroke="#fff" stroke-width="1.300"/><circle cx="8" cy="13" r="1.300" fill="#fff"/></svg>
      <svg class="w-4 h-4 ml-2" viewBox="0 0 16 16"><path d="M.7 6h2.500L7 2.500v11L3.200 10H.7z" fill="none" stroke="#fff" stroke-width="1.200"/><path d="M9 5.500c1.200 1.500 1.200 3.500 0 5M11 3.500c2.200 2.800 2.200 6.200 0 9" fill="none" stroke="#fff" stroke-width="1.100"/><path d="M13 2c3 3.500 3 8.500 0 12" fill="none" stroke="#777"/></svg>
      <svg class="w-5 h-3.5 ml-2" viewBox="0 0 20 14"><rect x=".8" y="3" width="16.500" height="9.500" rx="2.500" fill="none" stroke="#fff" stroke-width="1.200"/><rect x="2.500" y="4.700" width="13" height="6" rx="1" fill="#86d68b"/><path d="M19 6v3.500" stroke="#fff" stroke-width="1.300"/><path d="M9.500 0 6.500 5h2l-1 4 4.500-5h-2.500z" fill="#fff" stroke="#241f1c" stroke-width=".5"/></svg>
      <div class="w-[66px] text-right leading-4"><p>8:31 AM</p><p>6/8/2026</p></div>
    </div>
  </footer>
</body>
</html>
